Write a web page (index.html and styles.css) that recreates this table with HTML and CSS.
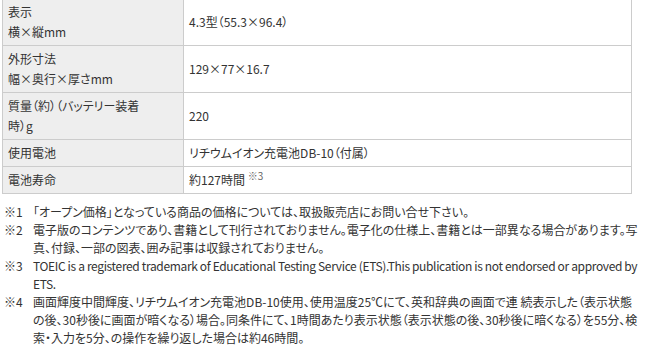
FILE: index.html
```html
<!DOCTYPE html>
<html lang="ja">
<head>
<meta charset="utf-8">
<title>仕様</title>
<link rel="stylesheet" href="styles.css">
</head>
<body>
<table class="spec">
  <tr><th>表示<br>横×縦mm</th><td>4.3型（55.3×96.4）</td></tr>
  <tr><th>外形寸法<br>幅×奥行×厚さmm</th><td>129×77×16.7</td></tr>
  <tr><th>質量（約）（バッテリー装着<br>時）g</th><td>220</td></tr>
  <tr><th>使用電池</th><td>リチウムイオン充電池DB-10（付属）</td></tr>
  <tr><th>電池寿命</th><td>約127時間 <sup>※3</sup></td></tr>
</table>
<ul class="notes">
  <li><span class="mark">※1</span><span class="txt">「オープン価格」となっている商品の価格については、取扱販売店にお問い合せ下さい。</span></li>
  <li><span class="mark">※2</span><span class="txt">電子版のコンテンツであり、書籍として刊行されておりません。電子化の仕様上、書籍とは一部異なる場合があります。写<br>真、付録、一部の図表、囲み記事は収録されておりません。</span></li>
  <li><span class="mark">※3</span><span class="txt latin">TOEIC is a registered trademark of Educational Testing Service (ETS).This publication is not endorsed or approved by<br>ETS.</span></li>
  <li><span class="mark">※4</span><span class="txt">画面輝度中間輝度、リチウムイオン充電池DB-10使用、使用温度25℃にて、英和辞典の画面で連 続表示した（表示状態<br>の後、30秒後に画面が暗くなる）場合。同条件にて、1時間あたり表示状態（表示状態の後、30秒後に暗くなる）を55分、検<br>索・入力を5分、の操作を繰り返した場合は約46時間。</span></li>
</ul>
</body>
</html>
```
FILE: styles.css
```css
html, body {
  margin: 0;
  padding: 0;
  background: #fff;
}
body {
  font-family: "Noto Sans CJK JP", "Noto Sans", sans-serif;
  font-size: 12px;
  color: #333;
  font-feature-settings: "palt";
}
.spec {
  border-collapse: collapse;
  width: 630px;
  margin: -2px 0 0 2px;
}
.spec th, .spec td {
  border: 1px solid #ccc;
  padding: 3px 5px 3px 5px;
  line-height: 20px;
  font-weight: normal;
  text-align: left;
  vertical-align: middle;
}
.spec th {
  width: 170px;
  background: #eee;
}
.spec sup {
  font-size: 10px;
  line-height: 1;
  vertical-align: 5px;
  color: #666;
}
.notes {
  list-style: none;
  margin: 9px 0 0 0;
  padding: 0 0 0 4px;
}
.notes li {
  display: flex;
  line-height: 18px;
}
.notes .mark {
  width: 29px;
  flex: none;
}
.notes .txt {
  flex: 1;
}
.notes .latin {
  white-space: nowrap;
  letter-spacing: -0.35px;
}
```
